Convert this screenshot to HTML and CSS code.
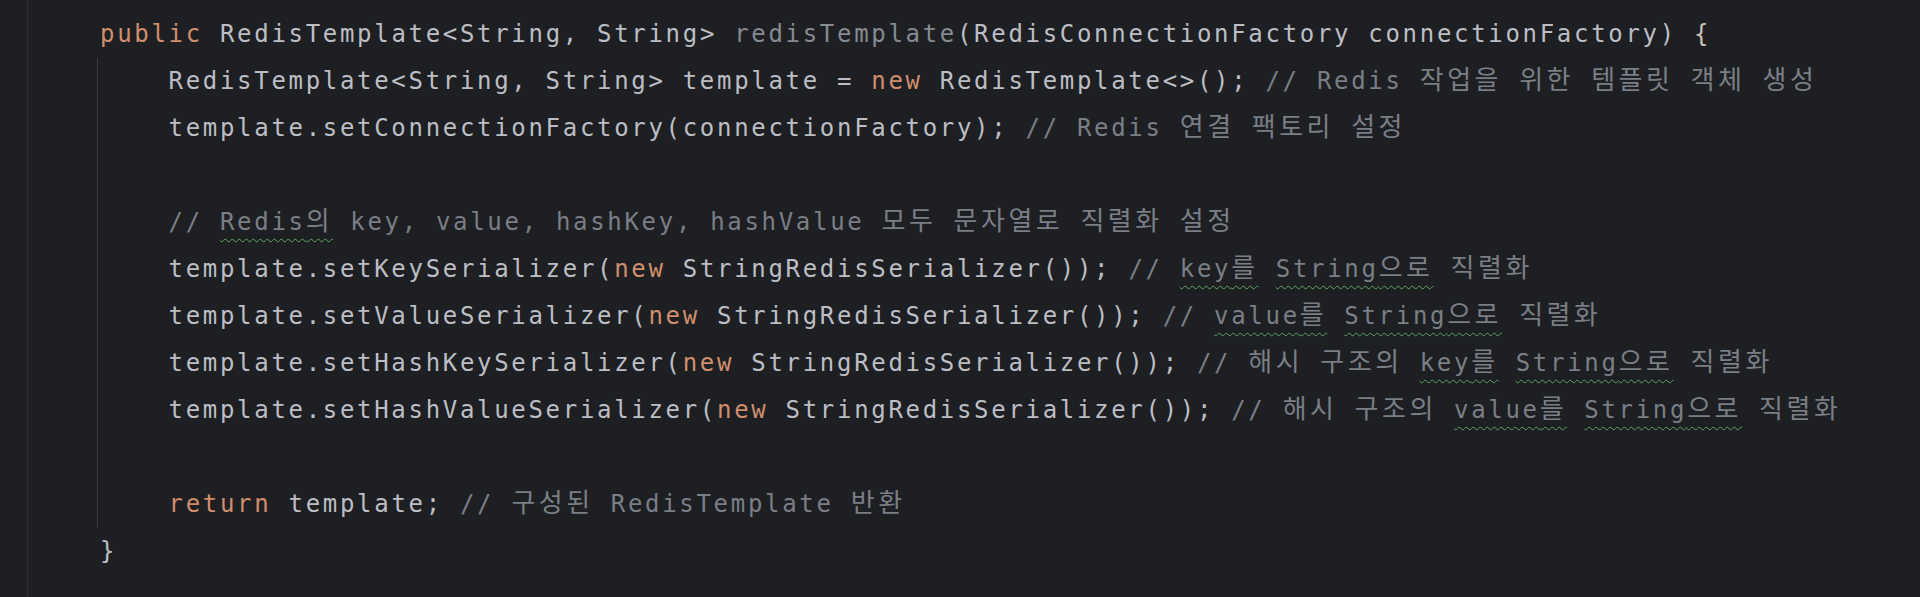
FILE: index.html
```html
<!DOCTYPE html>
<html lang="ko">
<head>
<meta charset="utf-8">
<title>RedisConfig</title>
<link rel="stylesheet" href="styles.css">
</head>
<body>
<div class="editor">
  <div class="class-body">
    <div class="line"><span class="ann">@Bean</span></div>
    <div class="line"><span class="kw">public</span> RedisTemplate&lt;String, String&gt; <span class="unused">redisTemplate</span>(RedisConnectionFactory connectionFactory) <span class="brace">{</span></div>
    <div class="method-body">
      <div class="line">    RedisTemplate&lt;String, String&gt; template = <span class="kw">new</span> RedisTemplate&lt;&gt;(); <span class="cm">// Redis <span class="ko">작업을</span> <span class="ko">위한</span> <span class="ko">템플릿</span> <span class="ko">객체</span> <span class="ko">생성</span></span></div>
      <div class="line">    template.setConnectionFactory(connectionFactory); <span class="cm">// Redis <span class="ko">연결</span> <span class="ko">팩토리</span> <span class="ko">설정</span></span></div>
      <div class="line"> </div>
      <div class="line">    <span class="cm">// <span class="typo">Redis<span class="ko">의</span></span> key, value, hashKey, hashValue <span class="ko">모두</span> <span class="ko">문자열로</span> <span class="ko">직렬화</span> <span class="ko">설정</span></span></div>
      <div class="line">    template.setKeySerializer(<span class="kw">new</span> StringRedisSerializer()); <span class="cm">// <span class="typo">key<span class="ko">를</span></span> <span class="typo">String<span class="ko">으로</span></span> <span class="ko">직렬화</span></span></div>
      <div class="line">    template.setValueSerializer(<span class="kw">new</span> StringRedisSerializer()); <span class="cm">// <span class="typo">value<span class="ko">를</span></span> <span class="typo">String<span class="ko">으로</span></span> <span class="ko">직렬화</span></span></div>
      <div class="line">    template.setHashKeySerializer(<span class="kw">new</span> StringRedisSerializer()); <span class="cm">// <span class="ko">해시</span> <span class="ko">구조의</span> <span class="typo">key<span class="ko">를</span></span> <span class="typo">String<span class="ko">으로</span></span> <span class="ko">직렬화</span></span></div>
      <div class="line">    template.setHashValueSerializer(<span class="kw">new</span> StringRedisSerializer()); <span class="cm">// <span class="ko">해시</span> <span class="ko">구조의</span> <span class="typo">value<span class="ko">를</span></span> <span class="typo">String<span class="ko">으로</span></span> <span class="ko">직렬화</span></span></div>
      <div class="line"> </div>
      <div class="line">    <span class="kw">return</span> template; <span class="cm">// <span class="ko">구성된</span> RedisTemplate <span class="ko">반환</span></span></div>
    </div>
    <div class="line">}</div>
  </div>
</div>
</body>
</html>
```

FILE: styles.css
```css
html, body {
  margin: 0;
  padding: 0;
  background: #1e1f22;
  height: 597px;
  overflow: hidden;
}

.editor {
  margin-top: -36px;
  padding-left: 27px;
  font-family: "DejaVu Sans Mono", monospace;
  font-size: 24px;
  letter-spacing: 2.69px;
  color: #bcbec4;
}

.class-body {
  border-left: 1px solid #2e3034;
  padding-left: 72px;
  min-height: 720px;
}

.method-body {
  margin-left: -3px;
  padding-left: 2px;
  border-left: 1px solid #393b40;
}

.line {
  height: 47px;
  line-height: 47px;
  white-space: pre;
}

.kw { color: #cf8e6d; }
.ann { color: #b3ae60; }
.unused { color: #868a91; }
.cm { color: #7a7e85; }
.brace { color: #c8c3b4; }

.ko {
  font-family: "Noto Sans CJK KR", sans-serif;
  font-size: 26px;
  letter-spacing: 3.5px;
  line-height: 1;
}

.typo {
  text-decoration: underline wavy #5ea461;
  text-decoration-thickness: 1px;
  text-underline-offset: 8px;
}
```
